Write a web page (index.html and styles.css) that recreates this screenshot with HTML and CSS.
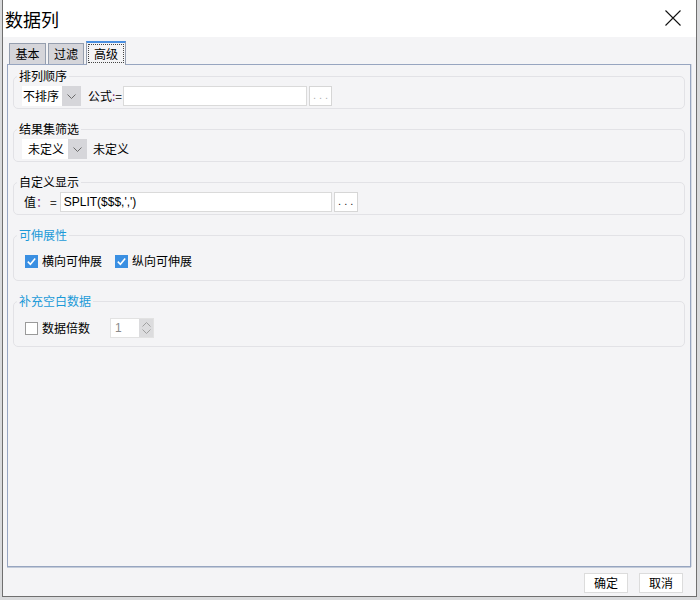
FILE: index.html
```html
<!DOCTYPE html>
<html lang="zh">
<head>
<meta charset="utf-8">
<title>数据列</title>
<link rel="stylesheet" href="styles.css">
</head>
<body>
<div class="dialog">
  <div class="titlebar">
    <span class="title">数据列</span>
    <svg class="close" width="16" height="16" viewBox="0 0 16 16"><path d="M0.5 0.5 L15.5 15.5 M15.5 0.5 L0.5 15.5" stroke="#111" stroke-width="1.1" fill="none"/></svg>
  </div>
  <div class="body">
    <div class="tabs">
      <div class="tab first">基本</div>
      <div class="tab">过滤</div>
      <div class="tab active"><span class="focus">高级</span></div>
    </div>
    <div class="panel">
      <fieldset class="group">
        <legend class="legend">排列顺序</legend>
        <div class="row row-a">
          <div class="combo w-sort"><span class="combo-val">不排序</span><span class="combo-arrow"><svg width="9" height="5" viewBox="0 0 9 5"><path d="M0.5 0.5 L4.5 4.5 L8.5 0.5" stroke="#6b6b6b" fill="none"/></svg></span></div>
          <span class="lbl formula">公式<span class="colon">:</span>=</span>
          <span class="input w-formula"></span>
          <span class="dots dim">. . .</span>
        </div>
      </fieldset>
      <fieldset class="group">
        <legend class="legend">结果集筛选</legend>
        <div class="row row-a">
          <div class="combo w-filter"><span class="combo-val">未定义</span><span class="combo-arrow"><svg width="9" height="5" viewBox="0 0 9 5"><path d="M0.5 0.5 L4.5 4.5 L8.5 0.5" stroke="#6b6b6b" fill="none"/></svg></span></div>
          <span class="lbl after-combo">未定义</span>
        </div>
      </fieldset>
      <fieldset class="group">
        <legend class="legend">自定义显示</legend>
        <div class="row row-v">
          <span class="lbl">值<span class="colon">：</span></span>
          <span class="lbl eq">=</span>
          <span class="input w-value"><span class="val-text">SPLIT($$$,',')</span></span>
          <span class="dots">. . .</span>
        </div>
      </fieldset>
      <fieldset class="group">
        <legend class="legend blue">可伸展性</legend>
        <div class="row row-c">
          <span class="check on"><svg width="13" height="13" viewBox="0 0 13 13"><path d="M2.8 6.6 L5.4 9.2 L10.2 3.6" stroke="#fff" stroke-width="1.6" fill="none"/></svg></span>
          <span class="lbl cb-lbl">横向可伸展</span>
          <span class="check on second"><svg width="13" height="13" viewBox="0 0 13 13"><path d="M2.8 6.6 L5.4 9.2 L10.2 3.6" stroke="#fff" stroke-width="1.6" fill="none"/></svg></span>
          <span class="lbl cb-lbl">纵向可伸展</span>
        </div>
      </fieldset>
      <fieldset class="group">
        <legend class="legend blue">补充空白数据</legend>
        <div class="row row-d">
          <span class="check"></span>
          <span class="lbl cb-lbl">数据倍数</span>
          <div class="spinner">
            <span class="spin-val">1</span>
            <span class="spin-arrows">
              <svg width="9" height="5" viewBox="0 0 9 5"><path d="M0.5 4.5 L4.5 0.5 L8.5 4.5" stroke="#a0a0a0" fill="none"/></svg>
              <svg width="9" height="5" viewBox="0 0 9 5"><path d="M0.5 0.5 L4.5 4.5 L8.5 0.5" stroke="#a0a0a0" fill="none"/></svg>
            </span>
          </div>
        </div>
      </fieldset>
    </div>
    <div class="footer">
      <span class="btn">确定</span>
      <span class="btn">取消</span>
    </div>
  </div>
</div>
</body>
</html>
```

FILE: styles.css
```css
* { box-sizing: border-box; }
html, body { margin: 0; padding: 0; }
body {
  background: #d9dadc;
  font-family: "Noto Sans CJK SC", "Liberation Sans", sans-serif;
  font-size: 12px;
  color: #000;
  width: 700px;
  height: 600px;
  overflow: hidden;
}
.dialog {
  margin-left: 2px;
  width: 695px;
  height: 597px;
  border: 1px solid #6f6f6f;
  border-top: none;
  background: #f4f4f6;
  display: flex;
  flex-direction: column;
}
.titlebar {
  height: 37px;
  background: #fff;
  display: flex;
  align-items: center;
  justify-content: space-between;
  padding-left: 2px;
  padding-right: 15px;
}
.title { font-size: 18px; line-height: 24px; }
.close { display: block; margin-top: -1px; }
.body {
  flex: 1;
  display: flex;
  flex-direction: column;
  padding-top: 4px;
}
.tabs {
  display: flex;
  align-items: flex-end;
  gap: 2px;
  margin-left: 6px;
  height: 23px;
}
.tab {
  height: 21px;
  width: 36px;
  justify-content: center;
  background: #d5d5da;
  border: 1px solid #959eae;
  border-bottom: none;
  display: flex;
  align-items: center;
  line-height: 16px;
}
.tab.first { width: 37px; }
.tab.active {
  position: relative;
  z-index: 1;
  width: 40px;
  height: 24px;
  margin-bottom: -1px;
  background: #f4f4f6;
  border-top: 2px solid #4a90e2;
  align-items: flex-start;
  padding-top: 1px;
}
.focus {
  border: 1px dotted #444;
  width: 36px;
  text-align: center;
  line-height: 17px;
  height: 19px;
}
.panel {
  height: 503px;
  margin: 0 5px 0 4px;
  border: 1px solid #97a5c0;
  box-shadow: 0 1px 0 #c3cbd9, 1px 0 0 #d6dbe4;
  padding: 3px 5px 0 5px;
}
.group {
  margin: 0 0 12px 0;
  padding: 2px 8px 2px 8px;
  border: 1px solid #e2e2e6;
  border-radius: 5px;
  min-width: 0;
}
.legend {
  font-size: 12px;
  line-height: 16px;
  padding: 0 2px;
  margin-left: -5px;
}
.legend.blue { color: #1b9ad8; }
.row {
  display: flex;
  align-items: center;
  height: 20px;
}
.row-c, .row-d { padding-left: 3px; height: 20px; }
.row-c { margin: 6px 0 7px; }
.row-d { margin: 7px 0 6px; }
.lbl { line-height: 16px; white-space: nowrap; }
.colon { color: #7b2a7b; }
.combo {
  display: flex;
  height: 20px;
  background: #fff;
}
.combo-val { flex: 1; padding-left: 1px; line-height: 19px; }
.combo-arrow {
  width: 19px;
  background: #d6d6da;
  display: flex;
  align-items: center;
  justify-content: center;
}
.w-sort { width: 59px; }
.w-filter { width: 65px; }
.w-filter .combo-val { padding-left: 6px; }
.formula { margin-left: 7px; }
.input {
  height: 20px;
  background: #fff;
  border: 1px solid #dadada;
  display: flex;
  align-items: center;
}
.w-formula { width: 184px; margin-left: 1px; }
.w-value { width: 272px; margin-left: 3px; }
.val-text { padding-left: 3px; font-family: "Liberation Sans", sans-serif; font-size: 12px; }
.dots {
  width: 24px;
  height: 20px;
  margin-left: 2px;
  background: #fff;
  border: 1px solid #d6d6d6;
  font-family: "Liberation Sans", sans-serif;
  font-size: 11px;
  line-height: 17px;
  text-align: center;
  color: #222;
}
.dots.dim { color: #b0b0b0; width: 23px; }
.after-combo { margin-left: 6px; }
.row-v { padding-left: 2px; }
.eq { margin-left: 2px; }
.check {
  width: 13px;
  height: 13px;
  border: 1.5px solid #9a9a9a;
  background: #fff;
  display: block;
  flex: none;
}
.check.on {
  border: none;
  background: #3a8fe2;
}
.check svg { display: block; }
.check.second { margin-left: 13px; }
.cb-lbl { margin-left: 4px; }
.spinner {
  display: flex;
  height: 20px;
  margin-left: 20px;
  background: #fff;
  border: 1px solid #e2e2e2;
}
.spin-val {
  width: 28px;
  padding-left: 4px;
  color: #8a8a8a;
  font-family: "Liberation Sans", sans-serif;
  line-height: 18px;
}
.spin-arrows {
  width: 14px;
  background: #dcdcde;
  display: flex;
  flex-direction: column;
  align-items: center;
  justify-content: space-around;
  padding: 2px 0;
}
.spin-arrows svg { display: block; }
.footer {
  display: flex;
  justify-content: flex-end;
  gap: 11px;
  padding: 6px 13px 0 0;
}
.btn {
  width: 44px;
  height: 20px;
  background: #fff;
  border: 1px solid #dcdcdc;
  text-align: center;
  line-height: 18px;
}
```
